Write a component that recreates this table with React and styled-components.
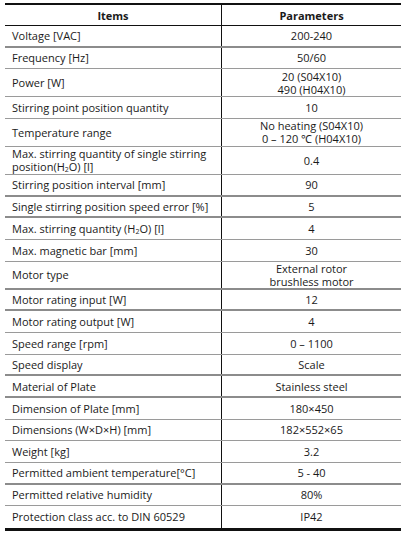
import styled, { createGlobalStyle } from 'styled-components';

const GlobalStyle = createGlobalStyle`
  html, body {
    margin: 0;
    padding: 0;
    background: #fff;
  }
  body {
    font-family: "Open Sans", "Liberation Sans", sans-serif;
    color: #1a1a1a;
  }
`;

const rows = [
  { item: 'Voltage [VAC]', value: '200-240', thick: true },
  { item: 'Frequency [Hz]', value: '50/60' },
  { item: 'Power [W]', value: ['20 (S04X10)', '490 (H04X10)'], tall: true },
  { item: 'Stirring point position quantity', value: '10' },
  { item: 'Temperature range', value: ['No heating (S04X10)', '0 – 120 ℃ (H04X10)'], tall: true },
  {
    item: ['Max. stirring quantity of single stirring', <>position(H<sub>2</sub>O) [l]</>],
    value: '0.4',
    tall: true,
  },
  { item: 'Stirring position interval [mm]', value: '90', thick: true },
  { item: 'Single stirring position speed error [%]', value: '5', thick: true },
  { item: <>Max. stirring quantity (H<sub>2</sub>O) [l]</>, value: '4' },
  { item: 'Max. magnetic bar [mm]', value: '30' },
  { item: 'Motor type', value: ['External rotor', 'brushless motor'], tall: true, thick: true },
  { item: 'Motor rating input [W]', value: '12', thick: true },
  { item: 'Motor rating output [W]', value: '4' },
  { item: 'Speed range [rpm]', value: '0 – 1100' },
  { item: 'Speed display', value: 'Scale', thick: true },
  { item: 'Material of Plate', value: 'Stainless steel', thick: true },
  { item: 'Dimension of Plate [mm]', value: '180×450' },
  { item: 'Dimensions (W×D×H) [mm]', value: '182×552×65' },
  { item: 'Weight [kg]', value: '3.2' },
  { item: 'Permitted ambient temperature[°C]', value: '5 - 40', thick: true },
  { item: 'Permitted relative humidity', value: '80%' },
  { item: 'Protection class acc. to DIN 60529', value: 'IP42', last: true },
];

const Page = styled.div`
  padding: 3px 5px 0 5px;
`;

const Table = styled.div`
  width: 396px;
  border-top: 2px solid #111;
  border-bottom: 3px solid #111;
`;

const Row = styled.div`
  display: grid;
  grid-template-columns: 216px 1fr;
  box-sizing: border-box;
  height: ${(p) => (p.$tall ? '28px' : '21.67px')};
  border-bottom: ${(p) =>
    p.$last ? 'none' : p.$thick ? '2px solid #8c8c8c' : '1px solid #9a9a9a'};
`;

const HeadRow = styled(Row)`
  height: 21px;
  border-bottom: 1px solid #111;
`;

const Cell = styled.div`
  display: flex;
  flex-direction: column;
  justify-content: center;
  align-items: ${(p) => (p.$center ? 'center' : 'flex-start')};
  text-align: ${(p) => (p.$center ? 'center' : 'left')};
  padding-left: ${(p) => (p.$center ? '0' : '7px')};
  font-size: 11px;
  line-height: 13px;
  white-space: nowrap;
  font-weight: ${(p) => (p.$bold ? 700 : 400)};
  & + & {
    border-left: 1px solid #111;
  }
  sub {
    font-size: 7px;
    line-height: 0;
    vertical-align: -1px;
  }
`;

const Line = styled.span`
  display: block;
`;

const lines = (v) =>
  (Array.isArray(v) ? v : [v]).map((l, i) => <Line key={i}>{l}</Line>);

export default function App() {
  return (
    <>
      <GlobalStyle />
      <Page>
        <Table>
          <HeadRow>
            <Cell $center $bold>Items</Cell>
            <Cell $center $bold>Parameters</Cell>
          </HeadRow>
          {rows.map((r, i) => (
            <Row key={i} $tall={r.tall} $thick={r.thick} $last={r.last}>
              <Cell>{lines(r.item)}</Cell>
              <Cell $center>{lines(r.value)}</Cell>
            </Row>
          ))}
        </Table>
      </Page>
    </>
  );
}
